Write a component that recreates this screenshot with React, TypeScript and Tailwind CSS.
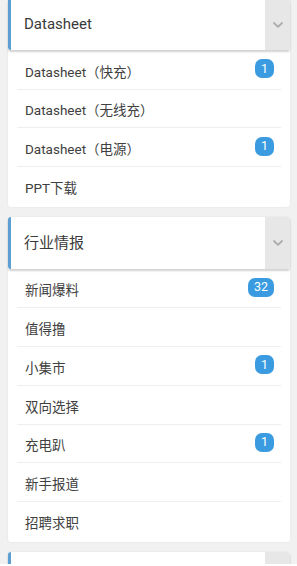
import React from "react";

type Item = { label: string; badge?: string };

const sections: { title: string; items: Item[] }[] = [
  {
    title: "Datasheet",
    items: [
      { label: "Datasheet（快充）", badge: "1" },
      { label: "Datasheet（无线充）" },
      { label: "Datasheet（电源）", badge: "1" },
      { label: "PPT下载" },
    ],
  },
  {
    title: "行业情报",
    items: [
      { label: "新闻爆料", badge: "32" },
      { label: "值得撸" },
      { label: "小集市", badge: "1" },
      { label: "双向选择" },
      { label: "充电趴", badge: "1" },
      { label: "新手报道" },
      { label: "招聘求职" },
    ],
  },
  { title: "", items: [] },
];

const Chevron = () => (
  <svg width="10" height="6" viewBox="0 0 10 6" fill="none">
    <path d="M1 1l4 3.8L9 1" stroke="#ababab" strokeWidth="1.8" strokeLinecap="round" strokeLinejoin="round" />
  </svg>
);

const Section = ({ title, items }: { title: string; items: Item[] }) => (
  <div className="bg-white rounded-[3px] shadow-[0_0_2px_rgba(0,0,0,0.08)]">
    {/* header */}
    <div className="flex h-[52px] rounded-[3px] overflow-hidden shadow-[0_2px_2px_rgba(0,0,0,0.18)] relative z-10">
      <div className="w-[3px] bg-[#5b9fd3]" />
      <div className="flex-1 flex items-center pl-[13px] text-[15px] text-[#3a3a3a]">{title}</div>
      <div className="w-[25px] bg-[#e7e7e7] flex items-center justify-center pt-[1px]">
        <Chevron />
      </div>
    </div>
    {items.length > 0 && (
      <div className="px-[9px] pt-[1px] pb-[1px]">
        {items.map((it, i) => (
          <div
            key={it.label}
            className={
              "h-[38.7px] flex items-center justify-between pl-[8px] pr-[7px] " +
              (i < items.length - 1 ? "border-b border-[#eeeeee]" : "")
            }
          >
            <span className="text-[13.5px] text-[#404040] pt-[4px]">{it.label}</span>
            {it.badge && (
              <span className="min-w-[19px] h-[19px] px-[6px] rounded-[7px] bg-[#3a9be0] text-white text-[12.5px] leading-none flex items-center justify-center mt-[-2px]">
                {it.badge}
              </span>
            )}
          </div>
        ))}
      </div>
    )}
  </div>
);

export default function App() {
  return (
    <div
      className="w-[297px] h-[566px] overflow-hidden bg-[#f1f1f1] pl-[8px] pr-[7px] mt-[-2px] flex flex-col gap-[10px]"
      style={{ fontFamily: "Roboto, 'Noto Sans CJK SC', sans-serif" }}
    >
      {sections.map((s, i) => (
        <Section key={i} title={s.title} items={s.items} />
      ))}
    </div>
  );
}
